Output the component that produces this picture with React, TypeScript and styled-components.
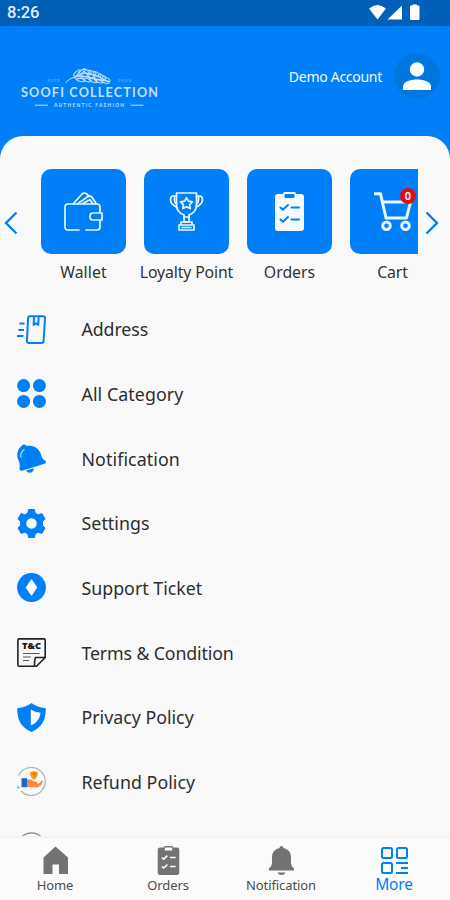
import React from "react";
import styled, { createGlobalStyle } from "styled-components";

const BLUE = "#0080f8";

const GlobalStyle = createGlobalStyle`
  * { box-sizing: border-box; }
  body { margin: 0; background: #f9f9f9; font-family: "Noto Sans", "Open Sans", sans-serif; }
`;

const Screen = styled.div`
  width: 450px;
  height: 900px;
  display: flex;
  flex-direction: column;
  overflow: hidden;
  background: ${BLUE};
`;

const StatusBar = styled.div`
  height: 26px;
  flex: none;
  display: flex;
  align-items: center;
  justify-content: space-between;
  padding: 0 29px 0 7px;
  background: #0060b8;
  color: #e4f0fc;
  font: 500 16.5px/26px Roboto, sans-serif;
`;

const Header = styled.header`
  height: 110px;
  flex: none;
  display: flex;
  justify-content: space-between;
  padding: 27px 10px 0 20px;
`;

const Brand = styled.div`
  width: 138px;
  padding-top: 15px;
`;

const Account = styled.div`
  display: flex;
  align-items: center;
  gap: 12px;
  height: 46px;
  color: #f2f9ff;
`;

const Avatar = styled.div`
  width: 46px;
  height: 46px;
  border-radius: 50%;
  background: #0077df;
`;

const Text = styled.span<{ $size: number; $spacing?: number }>`
  font-size: ${(p) => p.$size}px;
  letter-spacing: ${(p) => p.$spacing ?? 0}px;
  white-space: nowrap;
`;

const Panel = styled.main`
  flex: 1;
  min-height: 0;
  overflow: hidden;
  background: #f9f9f9;
  border-radius: 23px 23px 0 0;
`;

const Carousel = styled.section`
  display: flex;
  height: 161px;
  padding-top: 33px;
`;

const Arrow = styled.div<{ $side: "left" | "right" }>`
  flex: none;
  width: 32px;
  height: 108px;
  display: flex;
  align-items: center;
  padding-left: ${(p) => (p.$side === "left" ? 4 : 7)}px;
`;

const Tiles = styled.div`
  width: 386px;
  overflow: hidden;
  display: flex;
`;

const TileCell = styled.div`
  flex: none;
  width: 103px;
  display: flex;
  flex-direction: column;
  align-items: center;
  color: #333;
  line-height: 22px;
`;

const Tile = styled.div`
  position: relative;
  width: 85px;
  height: 85px;
  margin-bottom: 7px;
  display: flex;
  align-items: center;
  justify-content: center;
  border-radius: 10px;
  background: ${BLUE};
`;

const Badge = styled.span`
  position: absolute;
  top: 19px;
  left: 50px;
  width: 16px;
  height: 16px;
  border-radius: 50%;
  background: #e20a17;
  color: #fff;
  font-size: 11px;
  font-weight: 600;
  line-height: 16px;
  text-align: center;
`;

const Row = styled.div`
  display: flex;
  align-items: center;
  gap: 35.5px;
  height: 64.65px;
  padding-left: 17px;
  color: #2e2e2e;
`;

const NavBar = styled.nav`
  height: 64px;
  flex: none;
  display: grid;
  grid-template-columns: repeat(4, 113px);
  background: #fbfbfb;
  border-top: 2px solid #f2f2f2;
`;

const NavItem = styled.div<{ $active?: boolean }>`
  display: flex;
  flex-direction: column;
  align-items: center;
  padding-top: 8px;
  padding-right: 3px;
  color: ${(p) => (p.$active ? BLUE : "#4c4c4c")};
  line-height: ${(p) => (p.$active ? 18 : 20)}px;
`;

const TileSvg = ({ children }: { children: React.ReactNode }) => (
  <svg width="39" height="39" viewBox="0 0 39 39" fill="none" stroke="#e9f5ff" strokeWidth="1.7" strokeLinecap="round" strokeLinejoin="round">
    {children}
  </svg>
);

const RowSvg = ({ children }: { children: React.ReactNode }) => (
  <svg width="29" height="29" viewBox="0 0 29 29" fill={BLUE}>{children}</svg>
);

const Wallet = () => (
  <TileSvg>
    <path d="M15 38H4Q1 38 1 35V15Q1 12 4 12H33Q36 12 36 15V21M36 28V35Q36 38 33 38H22M38 21H28.5Q26 21 26 24.5T28.5 28H38Z" />
    <path d="M9.5 11.5 18 2Q20 .3 22 1.5L25 4M14 11.5 24 4.5Q26 3.5 28 5L32 11.5M19 11.5 26 7.5 28.5 11.5" />
  </TileSvg>
);

const Trophy = () => (
  <TileSvg>
    <path d="M9.5 1H29.5V13Q29.5 20 22 23V30H17V23Q9.5 20 9.5 13Z" />
    <path d="M9.5 4H6.5Q3.5 4 3.5 8T10 15.5M7.5 4.5V8Q7.5 11 9.5 12M29.5 4H32.5Q35.5 4 35.5 8T29 15.5M31.5 4.5V8Q31.5 11 29.5 12M17 25H22M14 30H25V33H14ZM12 33H27V38H12ZM15 35.5H24" />
    <path d="m19.5 5.6 1.9 3.6 4.1.6-2.9 2.8.6 4-3.7-1.9-3.7 1.9.6-4-2.9-2.8 4.1-.6Z" />
  </TileSvg>
);

const ClipShape = ({ ink, cut }: { ink: string; cut: string }) => (
  <>
    <path fill={ink} stroke="none" d="M8 2H13Q13 0 15 0H24Q26 0 26 2H31Q34 2 34 5V36Q34 39 31 39H8Q5 39 5 36V5Q5 2 8 2Z" />
    <path fill="none" stroke={cut} strokeWidth="2" d="M15.5 3H23.5V5H15.5ZM10.5 15.5 12.9 17.7 18 13M21.5 15.5H29M10.5 27.5 12.9 29.7 18 25M21.5 27.5H29" />
  </>
);

const Cart = () => (
  <svg width="39" height="39" viewBox="0 0 39 39" fill="none" stroke="#e9f5ff" strokeWidth="3" strokeLinejoin="round">
    <path d="M1 1.8H7.5L13 26H33.5L37.5 10H9.5" />
    <circle cx="13.5" cy="33.8" r="3.8" />
    <circle cx="32.5" cy="33.8" r="3.8" />
  </svg>
);

const Address = () => (
  <RowSvg>
    <path fill="none" stroke={BLUE} strokeWidth="2" strokeLinejoin="round" d="M13 1.2H26Q28.1 1.2 28 3.2L26.6 26Q26.4 28 24.4 28H12Q9.8 28 9.9 26L11.1 3.2Q11.2 1.2 13 1.2ZM17 1.2 16.7 10 19 8.3 21.2 10 21.7 1.2M2.5 8.5H7.5M1.5 15H7M0 21H6.5" />
  </RowSvg>
);

const Category = () => (
  <RowSvg>
    <circle cx="6.6" cy="6.6" r="6.5" /><circle cx="22.4" cy="6.6" r="6.5" />
    <circle cx="6.6" cy="22.4" r="6.5" /><circle cx="22.4" cy="22.4" r="6.5" />
  </RowSvg>
);

const TiltedBell = () => (
  <RowSvg>
    <path d="M4.3 2.3Q5.8-.6 8.8 1L9.4 1.9C17 .6 22.3 4.2 24.2 11 25.2 14.5 26.3 15.6 28.4 16.8Q29.6 18.2 28.2 19.6L5 26.8Q2.4 27 2.4 24.6C3.4 20.6 2.4 18.5 1 15.2-.7 10.8.3 5.6 4.3 2.3Z" />
    <path d="M9 26.5 17 24.2Q16.3 28.5 12.8 28.8 10.2 28.8 9 26.5Z" />
    <path d="M3.8 13.5Q3 8.5 7.5 5.2" fill="none" stroke="#b2d9ff" strokeWidth="1.3" />
  </RowSvg>
);

const Gear = () => (
  <RowSvg>
    <path stroke={BLUE} strokeWidth="1" strokeLinejoin="round" fillRule="evenodd" d="M11.6.5H17.4L18.2 4.2 21.2 5.8 24.9 4.6 28 10 25.4 12.7V16.3L28 19 24.9 24.4 21.2 23.2 18.2 24.8 17.4 28.5H11.6L10.8 24.8 7.8 23.2 4.1 24.4 1 19 3.6 16.3V12.7L1 10 4.1 4.6 7.8 5.8 10.8 4.2ZM14.5 8.8A5.7 5.7 0 1 0 14.5 20.2 5.7 5.7 0 1 0 14.5 8.8Z" />
  </RowSvg>
);

const Support = () => (
  <RowSvg>
    <circle cx="14.5" cy="14.5" r="14.4" />
    <path fill="#fff" d="M14.5 6 20.3 14.5 14.5 23 8.7 14.5Z" />
  </RowSvg>
);

const Terms = () => (
  <RowSvg>
    <path fill="none" stroke="#222" strokeWidth="1.6" strokeLinejoin="round" d="M2 .9H27Q28.2.9 28.2 2V19.5L19.5 28.2H2Q.9 28.2.9 27V2Q.9.9 2 .9ZM28 19.5H18.5Q17 24 17.5 28" />
    <path fill="none" stroke="#555" strokeWidth="1.2" d="M6 15.5H22.5M6 19H14M6 22.5H12" />
    <text x="14.6" y="11" fill="#161616" fontSize="8" fontWeight="900" textAnchor="middle" textLength="19" lengthAdjust="spacingAndGlyphs">T&amp;C</text>
  </RowSvg>
);

const Privacy = () => (
  <RowSvg>
    <path d="M14.5 0Q19 4 28.8 5.2C28.8 16.5 25.5 24 14.5 29 3.5 24 .2 16.5.2 5.2Q10 4 14.5 0Z" />
    <path fill="#fff" d="M13.8 6.5Q17.3 9 23.5 9.8C23 15 20 20 13.8 22.5Z" />
  </RowSvg>
);

const Refund = () => (
  <RowSvg>
    <path fill="none" stroke="#aeb2b4" strokeWidth="1.2" d="M1.6 8.5A14 14 0 1 1 4 24M0 20.5H3M1 18.5V22" />
    <path fill="#fa9f16" d="M13.2 5 17 4 20.8 5Q21.4 10.5 17 13 12.6 10.5 13.2 5Z" />
    <path fill="none" stroke="#b9640e" strokeWidth=".9" d="M18.5 6.5H16L18 8.5 16 10.5" />
    <path fill="#1769ce" d="M4.5 11.2H10V20.2H4.5Z" />
    <path fill="#f28a48" d="M10 12.5H14L17 14.5H20V16.5H22L24.7 13.7 26.3 14Q25 18 21 20.2H10Z" />
  </RowSvg>
);

const NextEntry = () => (
  <RowSvg><circle cx="14.5" cy="14.8" r="14" fill="none" stroke="#888" strokeWidth="1.2" /></RowSvg>
);

const Leaf = ({ x, y, r }: { x: number; y: number; r: number }) => (
  <ellipse cx={x} cy={y} rx="4.3" ry="1.5" transform={`rotate(${r} ${x} ${y})`} />
);

const Logo = () => (
  <svg width="140" height="42" viewBox="0 0 140 42" fill="#c2e0fc">
    <g fill="none" stroke="#c2e0fc" strokeWidth="1">
      <path d="M45.5 14.5Q54 6 67 9T90 14" />
      {[[57, 5, -42], [62, 3.5, -30], [67, 3.5, 18], [72, 4.5, 22], [77, 6, 25], [82, 8.5, 28], [86, 11, 25], [59, 9, -18], [65, 7, 5], [71, 8, 18], [77, 10, 22], [61, 12, 10], [67, 12, 16], [73, 12.5, 20], [79, 13, 18], [85, 13.5, 14]].map(([x, y, r]) => (
        <Leaf key={`${x}-${y}`} x={x} y={y} r={r} />
      ))}
      <path d="M15 37.2H28M110.5 37.2H123.5" />
    </g>
    <g fontFamily="Lato, sans-serif">
      <text x="28" y="13.8" fontSize="4" opacity=".65" textLength="12">ESTD</text>
      <text x="98" y="13.8" fontSize="4" opacity=".65" textLength="13">2020</text>
      <text x="1" y="29.4" fontSize="12.6" fontWeight="700" textLength="137">SOOFI COLLECTION</text>
      <text x="34" y="38.7" fontSize="4.8" fontWeight="700" textLength="70">AUTHENTIC FASHION</text>
    </g>
  </svg>
);

const tiles = [
  { label: "Wallet", icon: <Wallet />, spacing: 0.1 },
  { label: "Loyalty Point", icon: <Trophy />, spacing: -0.13 },
  { label: "Orders", icon: <TileSvg><ClipShape ink="#f4faff" cut={BLUE} /></TileSvg>, spacing: 0 },
  { label: "Cart", icon: <Cart />, badge: "0", spacing: -0.1 },
];

const rows = [
  { label: "Address", icon: <Address />, spacing: -0.1 },
  { label: "All Category", icon: <Category />, spacing: 0.08 },
  { label: "Notification", icon: <TiltedBell />, spacing: 0.1 },
  { label: "Settings", icon: <Gear />, spacing: 0.05 },
  { label: "Support Ticket", icon: <Support />, spacing: 0 },
  { label: "Terms & Condition", icon: <Terms />, spacing: -0.15 },
  { label: "Privacy Policy", icon: <Privacy />, spacing: 0 },
  { label: "Refund Policy", icon: <Refund />, spacing: 0.05 },
  { label: "", icon: <NextEntry />, spacing: 0 },
];

const HomeIcon = () => (
  <svg width="29" height="29" viewBox="0 0 29 29" fill="#737373"><path d="M14.5.5 27 11.5V28H18V18.5H11.5V28H2.5V11.5Z" /></svg>
);
const OrdersIcon = () => (
  <svg width="29" height="29" viewBox="0 0 39 39"><ClipShape ink="#737373" cut="#fff" /></svg>
);
const BellIcon = () => (
  <svg width="29" height="29" viewBox="0 0 29 29" fill="#737373"><path d="M12.5 2Q12.5 0 14.5 0T16.5 2Q24 4 24 11V17Q24 20 27 22.5V24.5H2V22.5Q5 20 5 17V11Q5 4 12.5 2ZM10.5 26.5H18.5Q17.5 29 14.5 29T10.5 26.5Z" /></svg>
);
const MoreIcon = () => (
  <svg width="29" height="29" viewBox="0 0 29 29" fill="none" stroke={BLUE} strokeWidth="2">
    <rect x="2" y="2" width="10" height="10" rx="1.5" /><rect x="17" y="2" width="10" height="10" rx="1.5" /><rect x="2" y="17" width="10" height="10" rx="1.5" />
    <path d="M16 17H28M21 22H28M16 27H28" />
  </svg>
);

export default function App() {
  return (
    <Screen>
      <GlobalStyle />
      <StatusBar>
        <span>8:26</span>
        <svg width="52" height="18" viewBox="0 0 52 18" fill="#fff">
          <path d="M0 4.5Q8.5-2.5 17 4.5L8.5 15.5ZM18.5 15.5 33 1.5V15.5ZM41 2.5Q41 1.5 42 1.5H43.5V.5H48V1.5H49.5Q50.5 1.5 50.5 2.5V14.5Q50.5 16 49.5 16H42Q41 16 41 14.5Z" />
        </svg>
      </StatusBar>
      <Header>
        <Brand><Logo /></Brand>
        <Account>
          <Text $size={14} $spacing={-0.28}>Demo Account</Text>
          <Avatar>
            <svg width="46" height="46" viewBox="0 0 46 46" fill="#fff">
              <circle cx="23" cy="16.5" r="7.2" />
              <path d="M9 37V33.5C9 29 16 26.5 23 26.5S37 29 37 33.5V37Z" />
            </svg>
          </Avatar>
        </Account>
      </Header>
      <Panel>
        <Carousel>
          <Arrow $side="left">
            <svg width="14" height="24" viewBox="0 0 14 24" fill="none" stroke={BLUE} strokeWidth="2.4"><path d="M12.5 1.5 2 12 12.5 22.5" /></svg>
          </Arrow>
          <Tiles>
            {tiles.map((t) => (
              <TileCell key={t.label}>
                <Tile>{t.icon}{t.badge && <Badge>{t.badge}</Badge>}</Tile>
                <Text $size={15.8} $spacing={t.spacing}>{t.label}</Text>
              </TileCell>
            ))}
          </Tiles>
          <Arrow $side="right">
            <svg width="14" height="24" viewBox="0 0 14 24" fill="none" stroke={BLUE} strokeWidth="2.4"><path d="M1.5 1.5 12 12 1.5 22.5" /></svg>
          </Arrow>
        </Carousel>
        {rows.map((r) => (
          <Row key={r.label}>{r.icon}<Text $size={17.8} $spacing={r.spacing}>{r.label}</Text></Row>
        ))}
      </Panel>
      <NavBar>
        <NavItem><HomeIcon /><Text $size={13} $spacing={-0.1}>Home</Text></NavItem>
        <NavItem><OrdersIcon /><Text $size={13} $spacing={-0.1}>Orders</Text></NavItem>
        <NavItem><BellIcon /><Text $size={13} $spacing={-0.1}>Notification</Text></NavItem>
        <NavItem $active><MoreIcon /><Text $size={15.5} $spacing={-0.2}>More</Text></NavItem>
      </NavBar>
    </Screen>
  );
}
